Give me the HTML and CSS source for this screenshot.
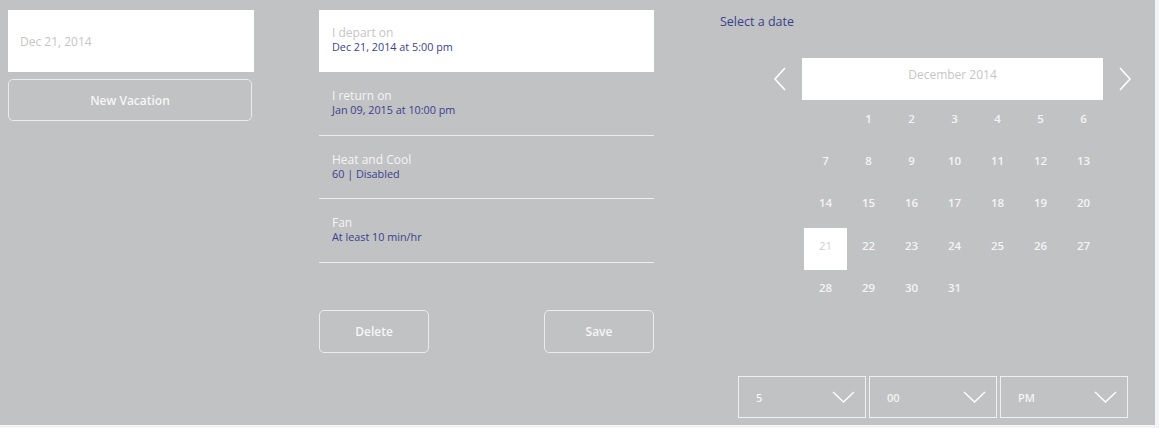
FILE: index.html
```html
<!DOCTYPE html>
<html lang="en">
<head>
    <meta charset="UTF-8">
    <title>Vacation</title>
    <link rel="stylesheet" href="styles.css">
</head>
<body>
    <div class="screen">
        <div class="col-left">
            <div class="vacation-item">Dec 21, 2014</div>
            <button class="btn btn-wide">New Vacation</button>
        </div>

        <div class="col-mid">
            <div class="field active">
                <div class="field-label">I depart on</div>
                <div class="field-value">Dec 21, 2014 at 5:00 pm</div>
            </div>
            <div class="field">
                <div class="field-label">I return on</div>
                <div class="field-value">Jan 09, 2015 at 10:00 pm</div>
            </div>
            <div class="field">
                <div class="field-label">Heat and Cool</div>
                <div class="field-value">60 | Disabled</div>
            </div>
            <div class="field">
                <div class="field-label">Fan</div>
                <div class="field-value">At least 10 min/hr</div>
            </div>
            <div class="actions">
                <button class="btn btn-small">Delete</button>
                <button class="btn btn-small">Save</button>
            </div>
        </div>

        <div class="col-right">
            <div class="select-title">Select a date</div>
            <div class="calendar">
                <div class="cal-head">
                    <span class="cal-arrow">
                        <svg width="14" height="24" viewBox="0 0 14 24"><path d="M12 1 L2 12 L12 23" fill="none" stroke="#fff" stroke-width="1.6"/></svg>
                    </span>
                    <div class="cal-month">December 2014</div>
                    <span class="cal-arrow">
                        <svg width="14" height="24" viewBox="0 0 14 24"><path d="M2 1 L12 12 L2 23" fill="none" stroke="#fff" stroke-width="1.6"/></svg>
                    </span>
                </div>
                <div class="cal-grid">
                    <span></span>
                    <span>1</span><span>2</span><span>3</span><span>4</span><span>5</span><span>6</span>
                    <span>7</span><span>8</span><span>9</span><span>10</span><span>11</span><span>12</span><span>13</span>
                    <span>14</span><span>15</span><span>16</span><span>17</span><span>18</span><span>19</span><span>20</span>
                    <span class="selected">21</span><span>22</span><span>23</span><span>24</span><span>25</span><span>26</span><span>27</span>
                    <span>28</span><span>29</span><span>30</span><span>31</span>
                </div>
            </div>
            <div class="time-row">
                <div class="time-select">5<svg width="23" height="12" viewBox="0 0 23 12"><path d="M1 1 L11.5 11 L22 1" fill="none" stroke="#fff" stroke-width="1.4"/></svg></div>
                <div class="time-select">00<svg width="23" height="12" viewBox="0 0 23 12"><path d="M1 1 L11.5 11 L22 1" fill="none" stroke="#fff" stroke-width="1.4"/></svg></div>
                <div class="time-select">PM<svg width="23" height="12" viewBox="0 0 23 12"><path d="M1 1 L11.5 11 L22 1" fill="none" stroke="#fff" stroke-width="1.4"/></svg></div>
            </div>
        </div>
    </div>
</body>
</html>
```

FILE: styles.css
```css
body {
    margin: 0;
    background: #f4f4f4;
    font-family: 'Open Sans', sans-serif;
}

.screen {
    width: 1155px;
    height: 425px;
    box-sizing: border-box;
    background: #c1c2c4;
    display: flex;
    padding-top: 10px;
}

.col-left {
    width: 246px;
    margin-left: 8px;
}

.vacation-item {
    height: 62px;
    background: #fff;
    color: #c6c6c6;
    font-size: 12px;
    padding-left: 12px;
    display: flex;
    align-items: center;
}

.btn {
    background: transparent;
    border: 1px solid #ececec;
    border-radius: 5px;
    color: #f6f6f6;
    font-family: 'Open Sans', sans-serif;
    font-weight: 600;
    font-size: 12px;
    padding: 0;
}

.btn-wide {
    width: 244px;
    height: 42px;
    margin-top: 7px;
}

.col-mid {
    width: 335px;
    margin-left: 65px;
}

.field {
    height: 63.5px;
    box-sizing: border-box;
    padding: 17px 0 0 13px;
    border-bottom: 1px solid #ececec;
}

.field.active {
    height: 62px;
    padding-top: 16px;
    background: #fff;
    border-bottom: none;
}

.field-label {
    font-size: 12px;
    line-height: 14px;
    color: #f4f4f4;
}

.field.active .field-label {
    color: #c6c6c6;
}

.field-value {
    font-size: 10.8px;
    line-height: 14px;
    color: #3a3f8c;
}

.actions {
    display: flex;
    justify-content: space-between;
    margin-top: 47px;
}

.btn-small {
    width: 110px;
    height: 43px;
}

.col-right {
    width: 435px;
    margin-left: 66px;
}

.select-title {
    font-size: 12.5px;
    color: #3a3f8c;
    line-height: 14px;
    margin-top: 5px;
}

.calendar {
    margin-top: 29px;
    margin-left: 38px;
}

.cal-head {
    display: flex;
    align-items: center;
}

.cal-arrow {
    width: 44px;
    display: flex;
    justify-content: center;
}

.cal-month {
    width: 301px;
    height: 42px;
    background: #fff;
    color: #c6c6c6;
    font-size: 12px;
    display: flex;
    align-items: center;
    justify-content: center;
    padding-bottom: 9px;
    box-sizing: border-box;
}

.cal-grid {
    display: grid;
    grid-template-columns: repeat(7, 43px);
    grid-auto-rows: 42.3px;
    margin-left: 46px;
    margin-top: 1px;
}

.cal-grid span {
    display: flex;
    align-items: center;
    justify-content: center;
    padding-bottom: 8px;
    color: #f4f4f4;
    font-size: 11.5px;
    font-weight: 600;
}

.cal-grid span.selected {
    background: #fff;
    color: #d0d0d0;
    font-weight: 400;
}

.time-row {
    display: flex;
    gap: 3px;
    margin-top: 64px;
    margin-left: 18px;
}

.time-select {
    width: 128px;
    height: 42px;
    box-sizing: border-box;
    border: 1px solid #f0f0f0;
    display: flex;
    align-items: center;
    justify-content: space-between;
    padding: 0 10px 0 17px;
    color: #f4f4f4;
    font-size: 11px;
    font-weight: 600;
}
```
